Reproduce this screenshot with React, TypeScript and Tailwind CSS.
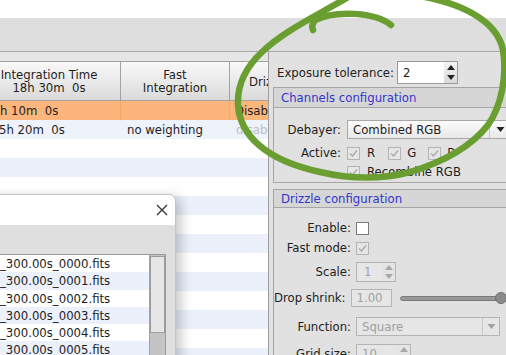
import React from "react";

function Check({ checked = false, disabled = false }: { checked?: boolean; disabled?: boolean }) {
  return (
    <div
      className={
        "w-[13px] h-[13px] border flex items-center justify-center shrink-0 " +
        (disabled ? "border-[#b4b4b4] bg-[#e6e6e6]" : "border-[#7a7a7a] bg-white")
      }
    >
      {checked && (
        <svg width="11" height="11" viewBox="0 0 11 11">
          <path d="M2 5.5 L4.5 8 L9 2.5" stroke={disabled ? "#a8a8a8" : "#333"} strokeWidth="1.3" fill="none" />
        </svg>
      )}
    </div>
  );
}

function Arrow({ up, color = "#222", w = 8 }: { up: boolean; color?: string; w?: number }) {
  return (
    <svg width={w} height="5" viewBox="0 0 8 5">
      {up ? <path d="M0 5 L4 0 L8 5 Z" fill={color} /> : <path d="M0 0 L8 0 L4 5 Z" fill={color} />}
    </svg>
  );
}

function Spin({ disabled = false }: { disabled?: boolean }) {
  const c = disabled ? "#a8a8a8" : "#222";
  return (
    <div className={"w-[13px] h-full flex flex-col " + (disabled ? "bg-[#e4e4e4]" : "bg-gradient-to-b from-[#f4f4f4] to-[#d8d8d8]")}>
      <div className="flex-1 flex items-center justify-center">
        <Arrow up color={c} />
      </div>
      <div className="flex-1 flex items-center justify-center">
        <Arrow up={false} color={c} />
      </div>
    </div>
  );
}

export default function App() {
  const stripes = Array.from({ length: 12 });
  const files = ["0000", "0001", "0002", "0003", "0004", "0005", "0006"];
  return (
    <div className="relative w-[506px] h-[355px] overflow-hidden bg-white text-[13px] text-[#1e1e1e] font-['DejaVu_Sans_Condensed','Liberation_Sans',sans-serif]">
      <div className="h-[18px] bg-white" />
      <div className="h-[34px] bg-[#dedede] border-b border-[#a9a9a9]" />
      <div className="flex h-[303px] overflow-hidden">
        {/* Table */}
        <div className="w-[268px] flex flex-col bg-white shrink-0 overflow-hidden">
          <div className="h-[9px] shrink-0 bg-[#e6e6e6]" />
          <div className="flex shrink-0 h-[40px] border-y border-[#a3a3a3] bg-gradient-to-b from-[#f9f9f9] to-[#dadada] leading-[13px]">
            <div className="w-[121px] border-r border-[#a3a3a3] overflow-hidden flex items-center">
              <div className="ml-[-22px] w-[142px] text-center whitespace-pre shrink-0">
                {"Integration Time\n18h 30m  0s"}
              </div>
            </div>
            <div className="w-[109px] border-r border-[#a3a3a3] flex items-center justify-center text-center whitespace-pre">
              {"Fast\nIntegration"}
            </div>
            <div className="flex-1 flex items-center pl-[19px] overflow-hidden whitespace-nowrap">Drizzle</div>
          </div>
          <div className="flex shrink-0 h-[19px] bg-[#fcb57b] items-center">
            <div className="w-[121px] overflow-hidden border-r border-[#f3a868] h-full flex items-center">
              <span className="ml-[-15px] whitespace-pre">{"13h 10m  0s"}</span>
            </div>
            <div className="w-[109px] h-full border-r border-[#f3a868]" />
            <div className="flex-1 pl-[5px] whitespace-nowrap overflow-hidden">Disabled</div>
          </div>
          <div className="flex shrink-0 h-[19px] bg-[#eef2fb] items-center">
            <div className="w-[121px] overflow-hidden h-full flex items-center">
              <span className="ml-[-1px] whitespace-pre">{"5h 20m  0s"}</span>
            </div>
            <div className="w-[109px] pl-[6px] whitespace-nowrap">no weighting</div>
            <div className="flex-1 pl-[6px] text-[#bdbdbd] whitespace-nowrap overflow-hidden">disabled</div>
          </div>
          {stripes.map((_, i) => (
            <div key={i} className={"h-[19px] shrink-0 " + (i % 2 === 0 ? "bg-white" : "bg-[#ebf0fa]")} />
          ))}
        </div>

        {/* Right panel */}
        <div className="flex-1 bg-[#e1e1e1] border-l border-[#9e9e9e] pt-[9px] overflow-hidden">
          <div className="flex items-center h-[23px] pl-[8px]">
            <div className="w-[120px] whitespace-nowrap">Exposure tolerance:</div>
            <div className="w-[61px] h-[23px] border border-[#9a9a9a] bg-white flex shrink-0">
              <div className="flex-1 pl-[5px] flex items-center">2</div>
              <Spin />
            </div>
          </div>

          {/* Channels */}
          <div className="mt-[3px] ml-[4px] w-[245px] border border-[#a5a5a5]">
            <div className="h-[20px] bg-[#d6d6d6] border-b border-[#a5a5a5] text-[#3434cc] pl-[7px] flex items-center whitespace-nowrap">
              Channels configuration
            </div>
            <div className="pt-[12px] pb-[1px]">
              <div className="flex items-center h-[19px]">
                <div className="w-[67px] text-right">Debayer:</div>
                <div className="ml-[6px] w-[164px] h-[19px] border border-[#a8a8a8] bg-gradient-to-b from-[#fbfbfb] to-[#e8e8e8] flex shrink-0">
                  <div className="flex-1 pl-[5px] flex items-center whitespace-nowrap">Combined RGB</div>
                  <div className="w-[21px] border-l border-[#c4c4c4] flex items-center justify-center">
                    <Arrow up={false} w={9} />
                  </div>
                </div>
              </div>
              <div className="flex items-center h-[18px] mt-[5px]">
                <div className="w-[67px] text-right">Active:</div>
                <div className="ml-[6px] flex items-center">
                  <Check checked disabled />
                  <span className="ml-[7px]">R</span>
                  <div className="ml-[13px]">
                    <Check checked disabled />
                  </div>
                  <span className="ml-[6px]">G</span>
                  <div className="ml-[12px]">
                    <Check checked disabled />
                  </div>
                  <span className="ml-[6px]">B</span>
                </div>
              </div>
              <div className="flex items-center h-[18px] mt-[1px] pl-[73px]">
                <Check checked disabled />
                <span className="ml-[7px] whitespace-nowrap">Recombine RGB</span>
              </div>
            </div>
          </div>

          {/* Drizzle */}
          <div className="mt-[6px] ml-[4px] w-[245px] border border-[#a5a5a5] h-[200px]">
            <div className="h-[18px] bg-[#d6d6d6] border-b border-[#a5a5a5] text-[#3434cc] pl-[7px] flex items-center whitespace-nowrap">
              Drizzle configuration
            </div>
            <div className="pt-[11px]">
              <div className="flex items-center h-[18px]">
                <div className="w-[77px] text-right">Enable:</div>
                <div className="ml-[5px]">
                  <Check />
                </div>
              </div>
              <div className="flex items-center h-[18px] mt-[2px]">
                <div className="w-[77px] text-right whitespace-nowrap">Fast mode:</div>
                <div className="ml-[5px]">
                  <Check checked disabled />
                </div>
              </div>
              <div className="flex items-center h-[20px] mt-[5px]">
                <div className="w-[77px] text-right">Scale:</div>
                <div className="ml-[5px] w-[40px] h-[20px] border border-[#b4b4b4] bg-[#e6e6e6] flex">
                  <div className="flex-1 pl-[7px] text-[#a0a0a0] flex items-center">1</div>
                  <Spin disabled />
                </div>
              </div>
              <div className="flex items-center h-[18px] mt-[7px]">
                <div className="w-[77px] text-right whitespace-nowrap">Drop shrink:</div>
                <div className="ml-[5px] w-[41px] h-[18px] border border-[#b4b4b4] bg-[#e6e6e6] pl-[5px] text-[#a0a0a0] flex items-center shrink-0">
                  1.00
                </div>
                <div className="ml-[8px] relative w-[120px] h-[14px] flex items-center shrink-0">
                  <div className="w-full h-[5px] rounded-full bg-[#979797] border border-[#7a7a7a]" />
                  <div className="absolute left-[95px] w-[12px] h-[12px] rounded-full bg-[#8a8a8a] border border-[#707070]" />
                </div>
              </div>
              <div className="flex items-center h-[19px] mt-[10px]">
                <div className="w-[77px] text-right">Function:</div>
                <div className="ml-[5px] w-[144px] h-[19px] border border-[#b4b4b4] bg-[#e6e6e6] flex shrink-0">
                  <div className="flex-1 pl-[5px] text-[#a0a0a0] flex items-center">Square</div>
                  <div className="w-[17px] border-l border-[#c8c8c8] flex items-center justify-center">
                    <Arrow up={false} color="#a0a0a0" w={9} />
                  </div>
                </div>
              </div>
              <div className="flex items-center h-[20px] mt-[8px]">
                <div className="w-[77px] text-right whitespace-nowrap">Grid size:</div>
                <div className="ml-[5px] w-[55px] h-[20px] border border-[#b4b4b4] bg-[#e6e6e6] flex">
                  <div className="flex-1 pl-[5px] text-[#a0a0a0] flex items-center">10</div>
                  <Spin disabled />
                </div>
              </div>
            </div>
          </div>
        </div>
      </div>

      {/* Dialog */}
      <div className="absolute left-[-100px] top-[194px] w-[276px] h-[190px] bg-[#dfdfdf] border border-[#c4c4c4] rounded-tr-[7px] shadow-[5px_3px_12px_rgba(0,0,0,0.22)] overflow-hidden">
        <div className="h-[30px] bg-white relative">
          <svg className="absolute left-[255px] top-[9px]" width="12" height="12" viewBox="0 0 12 12">
            <path d="M1 1 L11 11 M11 1 L1 11" stroke="#333" strokeWidth="1.3" />
          </svg>
        </div>
        <div className="pt-[29px] pl-[10px] pr-[9px]">
          <div className="h-[120px] border-t border-r border-[#9a9a9a] bg-white flex">
            <div className="flex-1 flex flex-col">
              {files.map((f, i) => (
                <div
                  key={f}
                  className={"h-[17.3px] shrink-0 pl-[89px] flex items-center whitespace-nowrap " + (i % 2 === 0 ? "bg-white" : "bg-[#ebf0fa]")}
                >
                  {"_300.00s_" + f + ".fits"}
                </div>
              ))}
            </div>
            <div className="w-[16px] bg-[#c4c4c4] border-l border-[#a0a0a0] pt-[1px]">
              <div className="h-[77px] bg-[#e6e6e6] border border-[#9c9c9c]" />
            </div>
          </div>
        </div>
      </div>

      {/* Green annotation */}
      <svg className="absolute inset-0 pointer-events-none" width="506" height="355" viewBox="0 0 506 355">
        <path
          d="M350 -4 C320 14, 285 30, 262 52 C245 68, 237 85, 238 105 C240 135, 265 160, 320 172 C350 179, 380 180, 410 172 C440 163, 470 148, 488 125 C502 105, 507 75, 503 50 C498 25, 470 5, 420 -4"
          stroke="#6a9e31"
          strokeWidth="6.5"
          strokeLinecap="round"
          fill="none"
        />
        <path d="M391 25 C375 12, 335 10, 315 20 C312 24, 312 28, 313 30" stroke="#6a9e31" strokeWidth="6.5" strokeLinecap="round" fill="none" />
      </svg>
    </div>
  );
}
